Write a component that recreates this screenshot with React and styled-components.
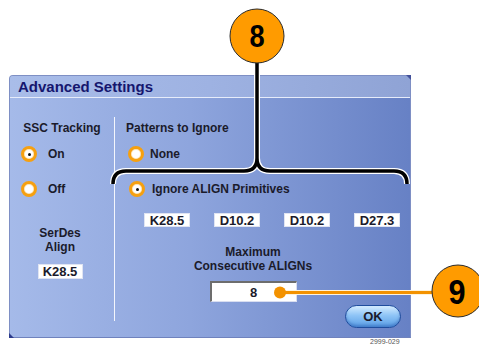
import React from 'react';
import styled, { createGlobalStyle } from 'styled-components';

const GlobalStyle = createGlobalStyle`
  html, body {
    margin: 0;
    padding: 0;
    background: #ffffff;
  }
  body {
    font-family: "Liberation Sans", Arial, sans-serif;
  }
`;

const Page = styled.div`
  position: relative;
  width: 479px;
  height: 346px;
  overflow: hidden;
  background: #ffffff;
  padding: 75px 0 0 9px;
  box-sizing: border-box;
`;

const Dialog = styled.div`
  position: relative;
  width: 402px;
  height: 263px;
  box-sizing: border-box;
  border: 1px solid #7e8fc4;
  border-bottom-color: #6f82bd;
  border-radius: 4px 0 0 0;
  display: flex;
  flex-direction: column;
  background: linear-gradient(90deg, #a5bae9 0%, #8ea5dd 45%, #6781c5 100%);
  &::after {
    content: '';
    position: absolute;
    top: -1px;
    right: -1px;
    border-top: 5px solid #42519a;
    border-left: 5px solid transparent;
  }
  &::before {
    content: '';
    position: absolute;
    bottom: -1px;
    left: -1px;
    border-bottom: 5px solid #2c3b8c;
    border-right: 5px solid transparent;
  }
`;

const TitleBar = styled.div`
  height: 21px;
  display: flex;
  align-items: center;
  padding-left: 8px;
  border-bottom: 1px solid #e6ecfa;
  border-radius: 3px 0 0 0;
  background: linear-gradient(90deg, #a9bde9 0%, #9eb2e2 50%, #8fa3d5 100%);
  font-size: 15px;
  font-weight: bold;
  color: #15166e;
`;

const Body = styled.div`
  flex: 1;
  display: flex;
`;

const LeftCol = styled.div`
  width: 104px;
  padding-top: 23px;
  box-sizing: border-box;
  display: flex;
  flex-direction: column;
`;

const Divider = styled.div`
  width: 1px;
  background: #f4f6fc;
  margin: 19px 0 16px;
`;

const RightCol = styled.div`
  flex: 1;
  padding: 23px 9px 0 11px;
  display: flex;
  flex-direction: column;
`;

const Heading = styled.div`
  font-size: 12px;
  font-weight: bold;
  line-height: 14px;
  color: #1b1b2b;
  text-align: ${({ $center }) => ($center ? 'center' : 'left')};
`;

const RadioRow = styled.div`
  display: flex;
  align-items: center;
  height: 18px;
  margin-top: ${({ $top }) => $top}px;
  padding-left: ${({ $indent }) => $indent}px;
  gap: ${({ $gap }) => $gap}px;
  font-size: 12px;
  font-weight: bold;
  color: #1b1b2b;
`;

const Radio = styled.span`
  width: 16px;
  height: 16px;
  box-sizing: border-box;
  border-radius: 50%;
  border: 3px solid #f6a010;
  background: #ffffff;
  box-shadow: inset 0 0 0 1px #fde7bd;
  display: flex;
  align-items: center;
  justify-content: center;
  &::after {
    content: '';
    width: 3px;
    height: 3px;
    border-radius: 50%;
    background: ${({ $checked }) => ($checked ? '#111111' : 'transparent')};
  }
`;

const SerDes = styled.div`
  margin-top: 28px;
  padding-right: 4px;
  display: flex;
  flex-direction: column;
  align-items: center;
`;

const Value = styled.div`
  width: ${({ $w }) => $w}px;
  height: ${({ $h }) => $h || 14}px;
  box-sizing: border-box;
  background: #ffffff;
  border: 1px solid #dfe4f2;
  display: flex;
  align-items: center;
  justify-content: center;
  font-size: 13px;
  font-weight: bold;
  color: #1b1b2b;
  margin-top: ${({ $top }) => $top || 0}px;
`;

const ValueRow = styled.div`
  display: flex;
  gap: 24px;
  margin: 15px 0 0 18px;
`;

const Centered = styled.div`
  width: 254px;
  margin-top: 18px;
  display: flex;
  flex-direction: column;
  align-items: center;
`;

const Input = styled.div`
  width: 87px;
  height: 21px;
  margin-top: 8px;
  box-sizing: border-box;
  background: #ffffff;
  border-top: 2px solid #6d6d6d;
  border-left: 2px solid #6d6d6d;
  border-right: 1px solid #d9def0;
  border-bottom: 1px solid #d9def0;
  display: flex;
  align-items: center;
  justify-content: center;
  font-size: 13px;
  font-weight: bold;
  color: #1b1b2b;
`;

const ButtonRow = styled.div`
  display: flex;
  justify-content: flex-end;
  margin-top: 3px;
`;

const OkButton = styled.div`
  width: 56px;
  height: 23px;
  box-sizing: border-box;
  border-radius: 12px;
  border: 1px solid #1f4d9e;
  background: linear-gradient(180deg, #d4ecff 0%, #8ec4f6 45%, #5a9fe6 100%);
  box-shadow: inset 0 -2px 3px rgba(20, 60, 150, 0.35);
  display: flex;
  align-items: center;
  justify-content: center;
  font-size: 13px;
  font-weight: bold;
  color: #1b1b2b;
`;

const FigLabel = styled.div`
  margin: 0 0 0 361px;
  font-size: 7px;
  line-height: 8px;
  color: #555555;
`;

const Overlay = styled.svg`
  position: absolute;
  top: 0;
  left: 0;
  pointer-events: none;
`;

const Callouts = () => (
  <Overlay width="479" height="346" viewBox="0 0 479 346">
    <g fill="none" strokeLinecap="butt">
      <path
        d="M113 184 Q113 171 126 171 L244 171 Q257 171 257 158 L257 62 M257 158 Q257 171 270 171 L394 171 Q407 171 407 184"
        stroke="#ffffff"
        strokeWidth="6"
      />
      <path
        d="M113 184 Q113 171 126 171 L244 171 Q257 171 257 158 L257 62 M257 158 Q257 171 270 171 L394 171 Q407 171 407 184"
        stroke="#000000"
        strokeWidth="3.5"
      />
      <line x1="280" y1="292.5" x2="434" y2="292.5" stroke="#fff3dc" strokeWidth="5" />
      <line x1="280" y1="292.5" x2="434" y2="292.5" stroke="#f39200" strokeWidth="3" />
    </g>
    <circle cx="280" cy="292.5" r="6" fill="#f39200" />
    <circle cx="257" cy="36" r="27" fill="#ff9b00" stroke="#2a2a2a" strokeWidth="1" />
    <text
      x="257"
      y="47"
      textAnchor="middle"
      fontFamily="'Liberation Sans', Arial, sans-serif"
      fontWeight="bold"
      fontSize="32"
      fill="#000000"
      transform="translate(257 0) scale(0.85 1) translate(-257 0)"
    >
      8
    </text>
    <circle cx="458" cy="291" r="26" fill="#ff9b00" stroke="#2a2a2a" strokeWidth="1" />
    <text
      x="457"
      y="304"
      textAnchor="middle"
      fontFamily="'Liberation Sans', Arial, sans-serif"
      fontWeight="bold"
      fontSize="36"
      fill="#000000"
      transform="translate(457 0) scale(0.85 1) translate(-457 0)"
    >
      9
    </text>
  </Overlay>
);

const App = () => (
  <>
    <GlobalStyle />
    <Page>
      <Dialog>
        <TitleBar>Advanced Settings</TitleBar>
        <Body>
          <LeftCol>
            <Heading $center>SSC Tracking</Heading>
            <RadioRow $top={10} $indent={11} $gap={11}>
              <Radio $checked />
              On
            </RadioRow>
            <RadioRow $top={17} $indent={11} $gap={11}>
              <Radio />
              Off
            </RadioRow>
            <SerDes>
              <Heading $center>SerDes</Heading>
              <Heading $center>Align</Heading>
              <Value $w={45} $h={15} $top={10}>K28.5</Value>
            </SerDes>
          </LeftCol>
          <Divider />
          <RightCol>
            <Heading>Patterns to Ignore</Heading>
            <RadioRow $top={10} $indent={2} $gap={6}>
              <Radio />
              None
            </RadioRow>
            <RadioRow $top={17} $indent={3} $gap={7}>
              <Radio $checked />
              Ignore ALIGN Primitives
            </RadioRow>
            <ValueRow>
              <Value $w={46}>K28.5</Value>
              <Value $w={46}>D10.2</Value>
              <Value $w={46}>D10.2</Value>
              <Value $w={46}>D27.3</Value>
            </ValueRow>
            <Centered>
              <Heading $center>Maximum</Heading>
              <Heading $center>Consecutive ALIGNs</Heading>
              <Input>8</Input>
            </Centered>
            <ButtonRow>
              <OkButton>OK</OkButton>
            </ButtonRow>
          </RightCol>
        </Body>
      </Dialog>
      <FigLabel>2999-029</FigLabel>
      <Callouts />
    </Page>
  </>
);

export default App;
